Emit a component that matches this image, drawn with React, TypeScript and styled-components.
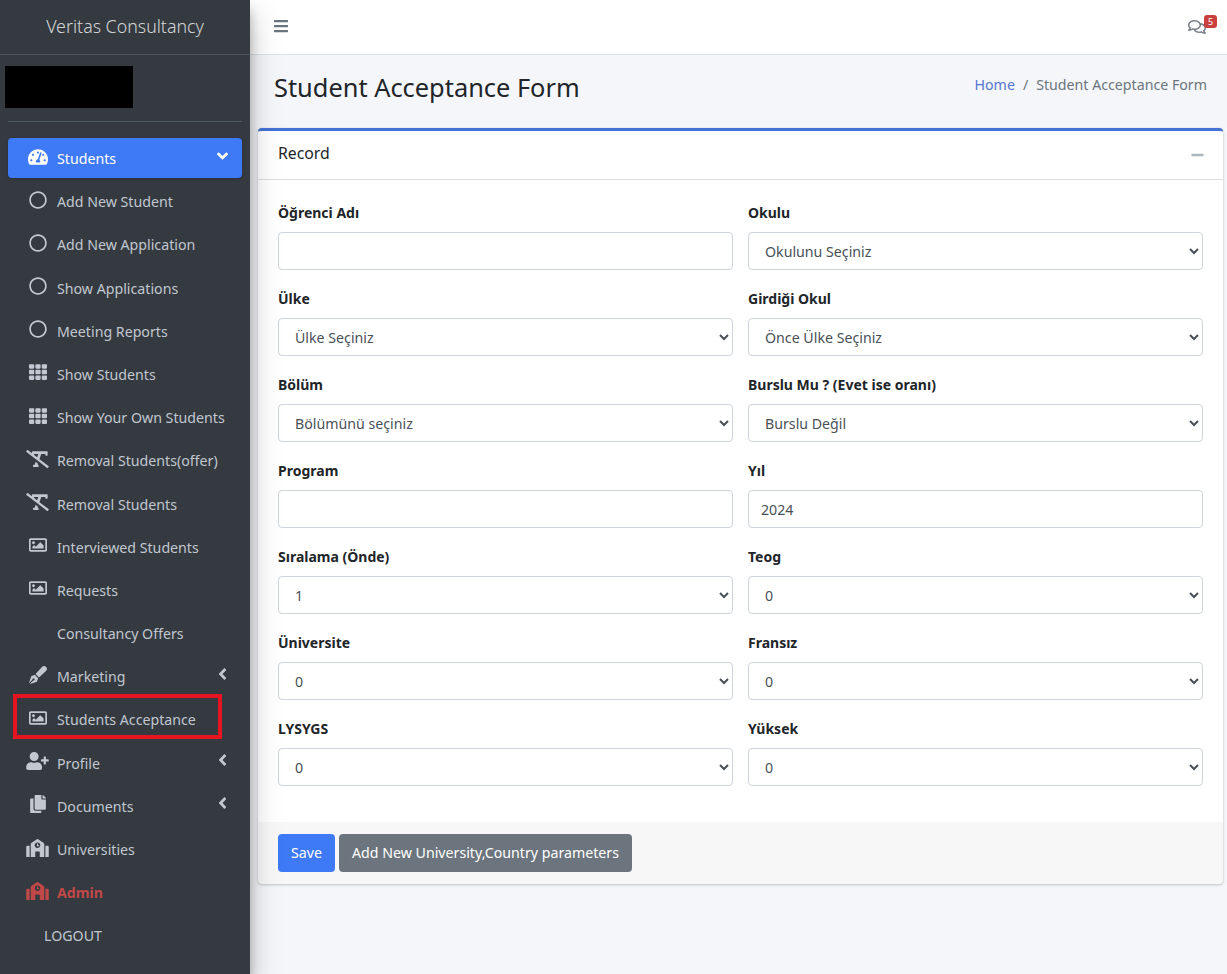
import React from 'react'
import styled, { createGlobalStyle } from 'styled-components'
import {
  FaAngleDown,
  FaAngleLeft,
  FaBars,
  FaCopy,
  FaMinus,
  FaPenFancy,
  FaRegCircle,
  FaRegComments,
  FaRegImage,
  FaRemoveFormat,
  FaSchool,
  FaTachometerAlt,
  FaTh,
  FaUserPlus,
} from 'react-icons/fa'

const FONT = `"Noto Sans", "Open Sans", "Liberation Sans", sans-serif`

const GlobalStyle = createGlobalStyle`
  html, body { margin: 0; padding: 0; height: 100%; }
  body {
    font-family: ${FONT};
    font-size: 14.2px;
    line-height: 24px;
    color: #212529;
    background: #f4f6f9;
    overflow: hidden;
  }
  * { box-sizing: border-box; }
`

const Wrapper = styled.div`
  display: grid;
  grid-template-columns: 250px 1fr;
  height: 974px;
`

const Sidebar = styled.aside`
  position: relative;
  z-index: 2;
  background: #343a40;
  box-shadow: 0 14px 28px rgba(0, 0, 0, 0.25), 0 10px 10px rgba(0, 0, 0, 0.22);
`

const Brand = styled.div`
  height: 55px;
  padding-bottom: 2px;
  border-bottom: 1px solid #4b545c;
  display: flex;
  align-items: center;
  justify-content: center;
  font-size: 17.8px;
  font-weight: 300;
  color: rgba(255, 255, 255, 0.8);
`

const UserPanel = styled.div`
  margin: 0 8px;
  height: 67px;
  padding-top: 11px;
  border-bottom: 1px solid #4f5962;
`

const Redacted = styled.div`
  width: 128px;
  height: 42px;
  margin-left: -3px;
  background: #000;
`

const NavList = styled.nav`
  display: flex;
  flex-direction: column;
  gap: 3.2px;
  padding: 16px 8px 0;
`

const NavItem = styled.a<{ $active?: boolean; $danger?: boolean; $bare?: boolean }>`
  position: relative;
  display: flex;
  align-items: center;
  height: 40px;
  padding: 0 14px 0 ${p => (p.$bare ? '36px' : '17px')};
  border-radius: 4px;
  font-weight: ${p => (p.$danger ? 700 : 400)};
  background: ${p => (p.$active ? '#3f7af6' : 'transparent')};
  color: ${p => (p.$active ? '#fff' : p.$danger ? '#c04848' : '#c2c7d0')};
  box-shadow: ${p => (p.$active ? '0 1px 3px rgba(0, 0, 0, 0.2)' : 'none')};
`

const NavIcon = styled.span<{ $width: number }>`
  flex: none;
  width: 25.6px;
  margin-right: 6.4px;
  display: flex;
  justify-content: center;
  margin-top: -3px;

  svg {
    height: 18px;
    width: ${p => p.$width}px;
    flex: none;
  }
`

const NavLabel = styled.span`
  white-space: nowrap;
  margin-top: 2px;
`

const NavArrow = styled.span<{ $dir: 'down' | 'left' }>`
  margin-left: auto;
  margin-right: ${p => (p.$dir === 'left' ? '1px' : '0')};
  display: flex;
  margin-top: -5px;

  svg {
    height: 18px;
    width: ${p => (p.$dir === 'left' ? '9px' : '11px')};
  }
`

const Highlight = styled.span`
  position: absolute;
  left: 5px;
  top: -5px;
  width: 209px;
  height: 45px;
  border: 4px solid #e8141f;
  pointer-events: none;
`

const Main = styled.main`
  display: flex;
  flex-direction: column;
  min-width: 0;
`

const Topbar = styled.header`
  height: 55px;
  flex: none;
  background: #fff;
  border-bottom: 1px solid #dee2e6;
  display: flex;
  align-items: center;
  justify-content: space-between;
  padding: 0 21px 0 24px;
  color: #6c757d;
`

const MenuIcon = styled(FaBars)`
  width: 14px;
  height: 16px;
  margin-top: -2px;
`

const Messages = styled.div`
  position: relative;
  display: flex;
  color: #7a8087;
`

const Badge = styled.span`
  position: absolute;
  right: -11px;
  top: -3px;
  width: 13px;
  height: 13px;
  border-radius: 3px;
  background: #c9403f;
  color: #fff;
  font-size: 9px;
  line-height: 13px;
  text-align: center;
`

const PageHeader = styled.div`
  height: 73px;
  flex: none;
  display: flex;
  align-items: center;
  justify-content: space-between;
  padding: 0 20px 8px 24px;
`

const Title = styled.h1`
  margin: -2px 0 0;
  font-size: 25.4px;
  font-weight: 400;
  line-height: 34px;
  color: #212529;
`

const Breadcrumb = styled.ol`
  list-style: none;
  margin: -6px 0 0;
  padding: 0;
  display: flex;
  color: #6c757d;
`

const Crumb = styled.li`
  & + &::before {
    content: '/';
    padding: 0 8px;
    color: #6c757d;
  }
`

const CrumbLink = styled.a`
  color: #5677cf;
`

const Content = styled.section`
  padding: 0 4px 0 8px;
`

const Card = styled.div`
  background: #fff;
  border-top: 3px solid #4472d6;
  border-radius: 4px;
  box-shadow: 0 0 1px rgba(0, 0, 0, 0.125), 0 1px 3px rgba(0, 0, 0, 0.2);
`

const CardHeader = styled.div`
  height: 49px;
  padding: 0 19px 4px 20px;
  border-bottom: 1px solid rgba(0, 0, 0, 0.125);
  display: flex;
  align-items: center;
  justify-content: space-between;
  font-size: 15.8px;
  color: #212529;
`

const Collapse = styled(FaMinus)`
  color: #adb5bd;
  width: 13px;
  height: 14px;
  margin-top: 4px;
`

const CardBody = styled.div`
  display: grid;
  grid-template-columns: 1fr 1fr;
  column-gap: 15px;
  padding: 20px 20px 4px;
  margin-bottom: 16px;
`

const Field = styled.div`
  margin-bottom: 16px;
  min-width: 0;
`

const Label = styled.label`
  display: block;
  height: 24px;
  margin-bottom: 8px;
  font-weight: 700;
  font-size: 14px;
  line-height: 26px;
`

const Input = styled.input`
  display: block;
  width: 100%;
  height: 38px;
  padding: 6px 12px;
  border: 1px solid #ced4da;
  border-radius: 4px;
  background: #fff;
  color: #495057;
  font: inherit;
`

const Select = styled.select`
  display: block;
  width: 100%;
  height: 38px;
  padding: 6px 12px;
  border: 1px solid #ced4da;
  border-radius: 4px;
  background: #fff;
  color: #495057;
  font: inherit;
`

const CardFooter = styled.div`
  display: flex;
  gap: 4px;
  padding: 12px 20px;
  background: rgba(0, 0, 0, 0.03);
  border-radius: 0 0 4px 4px;
`

const Button = styled.button<{ $variant: 'primary' | 'secondary' }>`
  height: 38px;
  padding: 0 13px;
  border: 0;
  border-radius: 4px;
  background: ${p => (p.$variant === 'primary' ? '#3f7af6' : '#6c757d')};
  color: #fff;
  font: inherit;
`

type NavEntry = {
  label: string
  icon?: React.ReactNode
  iconWidth?: number
  arrow?: 'down' | 'left'
  active?: boolean
  danger?: boolean
  bare?: boolean
  marked?: boolean
}

const navEntries: NavEntry[] = [
  { label: 'Students', icon: <FaTachometerAlt />, iconWidth: 20, arrow: 'down', active: true },
  { label: 'Add New Student', icon: <FaRegCircle /> },
  { label: 'Add New Application', icon: <FaRegCircle /> },
  { label: 'Show Applications', icon: <FaRegCircle /> },
  { label: 'Meeting Reports', icon: <FaRegCircle /> },
  { label: 'Show Students', icon: <FaTh /> },
  { label: 'Show Your Own Students', icon: <FaTh /> },
  { label: 'Removal Students(offer)', icon: <FaRemoveFormat />, iconWidth: 23 },
  { label: 'Removal Students', icon: <FaRemoveFormat />, iconWidth: 23 },
  { label: 'Interviewed Students', icon: <FaRegImage /> },
  { label: 'Requests', icon: <FaRegImage /> },
  { label: 'Consultancy Offers', icon: <span /> },
  { label: 'Marketing', icon: <FaPenFancy />, arrow: 'left' },
  { label: 'Students Acceptance', icon: <FaRegImage />, marked: true },
  { label: 'Profile', icon: <FaUserPlus />, iconWidth: 23, arrow: 'left' },
  { label: 'Documents', icon: <FaCopy />, iconWidth: 16, arrow: 'left' },
  { label: 'Universities', icon: <FaSchool />, iconWidth: 23 },
  { label: 'Admin', icon: <FaSchool />, iconWidth: 23, danger: true },
  { label: 'LOGOUT', bare: true },
]

type FieldEntry = { label: string; input?: string; select?: string }

const fields: FieldEntry[] = [
  { label: 'Öğrenci Adı', input: '' },
  { label: 'Okulu', select: 'Okulunu Seçiniz' },
  { label: 'Ülke', select: 'Ülke Seçiniz' },
  { label: 'Girdiği Okul', select: 'Önce Ülke Seçiniz' },
  { label: 'Bölüm', select: 'Bölümünü seçiniz' },
  { label: 'Burslu Mu ? (Evet ise oranı)', select: 'Burslu Değil' },
  { label: 'Program', input: '' },
  { label: 'Yıl', input: '2024' },
  { label: 'Sıralama (Önde)', select: '1' },
  { label: 'Teog', select: '0' },
  { label: 'Üniversite', select: '0' },
  { label: 'Fransız', select: '0' },
  { label: 'LYSYGS', select: '0' },
  { label: 'Yüksek', select: '0' },
]

const App = () => {
  return (
    <Wrapper>
      <GlobalStyle />
      <Sidebar>
        <Brand>Veritas Consultancy</Brand>
        <UserPanel>
          <Redacted />
        </UserPanel>
        <NavList>
          {navEntries.map(item => (
            <NavItem key={item.label} $active={item.active} $danger={item.danger} $bare={item.bare}>
              {item.icon && <NavIcon $width={item.iconWidth ?? 18}>{item.icon}</NavIcon>}
              <NavLabel>{item.label}</NavLabel>
              {item.arrow && (
                <NavArrow $dir={item.arrow}>{item.arrow === 'down' ? <FaAngleDown /> : <FaAngleLeft />}</NavArrow>
              )}
              {item.marked && <Highlight />}
            </NavItem>
          ))}
        </NavList>
      </Sidebar>
      <Main>
        <Topbar>
          <MenuIcon />
          <Messages>
            <FaRegComments size={18} />
            <Badge>5</Badge>
          </Messages>
        </Topbar>
        <PageHeader>
          <Title>Student Acceptance Form</Title>
          <Breadcrumb>
            <Crumb><CrumbLink>Home</CrumbLink></Crumb>
            <Crumb>Student Acceptance Form</Crumb>
          </Breadcrumb>
        </PageHeader>
        <Content>
          <Card>
            <CardHeader>
              Record
              <Collapse />
            </CardHeader>
            <CardBody>
              {fields.map(field => (
                <Field key={field.label}>
                  <Label>{field.label}</Label>
                  {field.select ? (
                    <Select defaultValue={field.select}>
                      <option>{field.select}</option>
                    </Select>
                  ) : (
                    <Input defaultValue={field.input} />
                  )}
                </Field>
              ))}
            </CardBody>
            <CardFooter>
              <Button $variant="primary">Save</Button>
              <Button $variant="secondary">Add New University,Country parameters</Button>
            </CardFooter>
          </Card>
        </Content>
      </Main>
    </Wrapper>
  )
}

export default App
